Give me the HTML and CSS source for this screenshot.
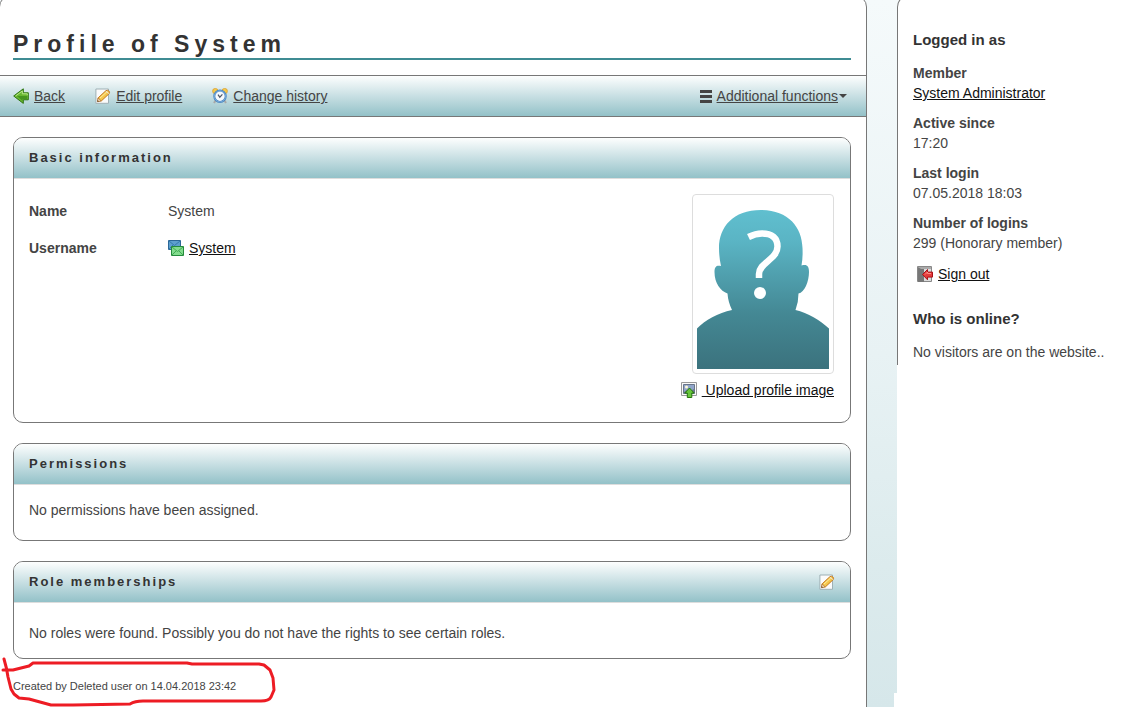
FILE: index.html
```html
<!DOCTYPE html>
<html lang="en">
<head>
  <meta charset="UTF-8">
  <meta name="viewport" content="width=device-width, initial-scale=1.0">
  <title>Profile of System</title>
  <link rel="stylesheet" href="styles.css">
</head>
<body>
  <div class="page">
    <main class="content">
      <h1 class="headline">Profile of System</h1>

      <nav class="toolbar">
        <a class="icon-link" href="#">
          <svg class="icon" viewBox="0 0 16 16">
            <path d="M.7 8 10.3.8v4h5v7h-5v3.6z" fill="#69b82f" stroke="#2f7513"/>
            <path d="M2.5 8 9.3 3v2.8h5v1.5" fill="none" stroke="#b9e58b"/>
            <path d="M4 8h10v3H9.6v2z" fill="#46951e"/>
          </svg>
          <span>Back</span>
        </a>
        <a class="icon-link" href="#">
          <svg class="icon" viewBox="0 0 16 16">
            <path d="M.9 1h12.6v14.3H.9z" fill="#fbfbfb" stroke="#9fb0b5"/>
            <path d="m3.2 9.8 7.7-7.1q1.6-1 3 .3 1.2 1.2.2 2.7l-7.5 7-3.9.8z" fill="#f4c64b" stroke="#c47a23"/>
            <path d="m5 10.1 7.2-6.6" stroke="#fff0a5"/>
            <path d="m3 9.9 3.2 3-3.6.9z" fill="#f7ddb8" stroke="#a06225" stroke-width=".6"/>
            <path d="m2.8 12 .9 1.4-1.2.4z" fill="#333"/>
            <path d="m10.9 2.9 2.9 2.8" stroke="#e9e2d7"/>
          </svg>
          <span>Edit profile</span>
        </a>
        <a class="icon-link" href="#">
          <svg class="icon" viewBox="0 0 16 16">
            <path d="M3.5 12.5 2 15m10.5-2.5L14 15" stroke="#a8a8a8" stroke-width="2"/>
            <circle cx="3.3" cy="3.1" r="2.7" fill="#f6c94a" stroke="#d79a24" stroke-width=".7"/>
            <circle cx="12.7" cy="3.1" r="2.7" fill="#f6c94a" stroke="#d79a24" stroke-width=".7"/>
            <circle cx="8" cy="8.3" r="5.7" fill="#f7fafd" stroke="#4583bf" stroke-width="2"/>
            <circle cx="8" cy="8.3" r="5.6" fill="none" stroke="#8db9e2" stroke-width=".7"/>
            <path d="m6 6.6 1.8 2.6 2.6-2.8" fill="none" stroke="#4b5668" stroke-width="1.2"/>
          </svg>
          <span>Change history</span>
        </a>
        <button class="icon-link menu-button" type="button">
          <svg class="icon-bars" viewBox="0 0 12 13">
            <path d="M0 1.5h12M0 6.5h12M0 11.5h12" stroke="#444" stroke-width="3"/>
          </svg>
          <span>Additional functions</span>
          <i class="caret"></i>
        </button>
      </nav>

      <section class="panel">
        <header class="panel-header">
          <h2 class="panel-title">Basic information</h2>
        </header>
        <div class="panel-body basic">
          <dl class="fields">
            <dt>Name</dt>
            <dd>System</dd>
            <dt>Username</dt>
            <dd>
              <a class="icon-link dark" href="#">
                <svg class="icon" viewBox="0 0 16 16">
                  <path d="M.5.5h12v9H.5z" fill="#5d9fce" stroke="#2c6798"/>
                  <path d="m1 1 5.5 4.5L12 1M1 9l4-4" fill="none" stroke="#347aad"/>
                  <path d="M3.5 6.5h12v9h-12z" fill="#82dc8d" stroke="#258b3c"/>
                  <path d="m4 7 5.5 4.5L15 7M4 15l4-4m7 4-4-4" fill="none" stroke="#42aa55"/>
                </svg>
                <span>System</span>
              </a>
            </dd>
          </dl>
          <div class="photo">
            <svg class="photo-image" viewBox="0 0 132 170">
              <defs>
                <linearGradient id="avatar" x1="0" y1="0" x2="0" y2="1">
                  <stop offset="0" stop-color="#60bfcf"/>
                  <stop offset=".2" stop-color="#5ab4c4"/>
                  <stop offset=".65" stop-color="#448894"/>
                  <stop offset="1" stop-color="#3b727d"/>
                </linearGradient>
              </defs>
              <path fill="url(#avatar)" d="M64 11C36 11 22 28 22 49q0 9 2 18c-4-1-6.500 0-6.500 6 0 11 6 19 13 21.500q.5 8 4.500 16.500C21 114 8 121 0 129.500V170h132v-40.500C123 121 111 114 98.500 111q3-8 3-16.500c6-1 10.500-12 10.500-21.500 0-6-2-8-7.500-6.500q1.500-8 1-17.500C105 28 91 11 64 11z"/>
              <path fill="none" stroke="#fff" stroke-width="6.500" d="M51.500 38q7-3.500 13.500-3.500c10 0 15.500 4.500 15.500 13 0 13-18.500 16-18.500 27.500V79"/>
              <circle cx="63" cy="94" r="6" fill="#fff"/>
            </svg>
            <a class="icon-link dark" href="#">
              <svg class="icon" viewBox="0 0 16 16">
                <path d="M.5.5h15v13H.5z" fill="#fafafa" stroke="#999"/>
                <path d="M2.500 2.500h11v9h-11z" fill="#91a6ca" stroke="#69758a"/>
                <circle cx="5.500" cy="5" r="1.500" fill="#fff8d8"/>
                <path d="m3 10 3-2 3 1 4-2v4H3z" fill="#6c7891"/>
                <path d="m8.500 6 4.700 5h-2.400v4.500H6.300V11H3.800z" fill="#67c63b" stroke="#26760d"/>
              </svg>
              <span>&nbsp;Upload profile image</span>
            </a>
          </div>
        </div>
      </section>

      <section class="panel">
        <header class="panel-header">
          <h2 class="panel-title">Permissions</h2>
        </header>
        <p class="panel-body permissions">No permissions have been assigned.</p>
      </section>

      <section class="panel">
        <header class="panel-header">
          <h2 class="panel-title">Role memberships</h2>
          <a class="icon-link" href="#" aria-label="Edit role memberships">
            <svg class="icon" viewBox="0 0 16 16">
              <path d="M.9 1h12.600v14.300H.9z" fill="#fbfbfb" stroke="#9fb0b5"/>
              <path d="m3.200 9.800 7.700-7.100q1.600-1 3 .3 1.200 1.200.2 2.700l-7.500 7-3.900.8z" fill="#f4c64b" stroke="#c47a23"/>
              <path d="m5 10.100 7.200-6.600" stroke="#fff0a5"/>
              <path d="m3 9.900 3.200 3-3.600.9z" fill="#f7ddb8" stroke="#a06225" stroke-width=".6"/>
              <path d="m2.800 12 .9 1.400-1.200.4z" fill="#333"/>
              <path d="m10.900 2.900 2.900 2.800" stroke="#e9e2d7"/>
            </svg>
          </a>
        </header>
        <p class="panel-body roles">No roles were found. Possibly you do not have the rights to see certain roles.</p>
      </section>

      <p class="created">
        Created by Deleted user on 14.04.2018 23:42
        <svg class="marker" viewBox="0 0 280 52">
          <path d="M4 3q3 10 4 18l3 12 3 5 5 4 10 1 22 6h22l57-1q5-3 13-3h118q8 0 10-4l3-7-1-12-3-8-6-5-5-1h-67l-5-1H33l-4 3-8 2-8 2H3"/>
        </svg>
      </p>
    </main>

    <aside class="side">
      <div class="side-panel">
        <h3 class="side-title">Logged in as</h3>
        <dl class="facts">
          <dt>Member</dt>
          <dd><a class="dark" href="#">System Administrator</a></dd>
          <dt>Active since</dt>
          <dd>17:20</dd>
          <dt>Last login</dt>
          <dd>07.05.2018 18:03</dd>
          <dt>Number of logins</dt>
          <dd>299 (Honorary member)</dd>
        </dl>
        <a class="icon-link dark sign-out" href="#">
          <svg class="icon" viewBox="0 0 16 16">
            <path d="M.5.500h14v15H.5z" fill="#ddd" stroke="#888"/>
            <path d="M1 1 7 3v13H1z" fill="#777"/>
            <path d="M1 1h13v2H4z" fill="#aaa"/>
            <path d="m5.500 8.500 5-5v2.600h5v5h-5v2.700z" fill="#e43b3b" stroke="#a91118"/>
            <path d="m8 8.500 2.500-2.500v1.500H14" fill="none" stroke="#ff8d85"/>
          </svg>
          <span>Sign out</span>
        </a>
        <h3 class="side-title">Who is online?</h3>
        <p class="online">No visitors are on the website..</p>
      </div>
      <div class="side-foot"></div>
    </aside>
  </div>
</body>
</html>
```
FILE: styles.css
```css
* {
  box-sizing: border-box;
}

body {
  margin: 0;
  overflow: hidden;
  font-family: "Liberation Sans", Arial, sans-serif;
  font-size: 14px;
  line-height: 20px;
  color: #444;
  background: linear-gradient(#f5fafb, #e8f2f4 50%, #dcebed 80%, #d6e7ea);
}

h1, h2, h3, p, dl, dd {
  margin: 0;
}

.page {
  display: flex;
  gap: 30px;
  height: 100vh;
}

/* Main column */
.content {
  flex: 1;
  margin: -5px 0 -20px -1px;
  padding-top: 34px;
  background: #fff;
  border: 1px solid #777;
  border-radius: 12px;
}

.headline {
  margin: 0 15px 15px 13px;
  border-bottom: 2px solid #3f8c93;
  font-size: 23px;
  line-height: 28px;
  letter-spacing: 5px;
  color: #333;
}

.toolbar {
  display: flex;
  align-items: center;
  gap: 30px;
  height: 42px;
  padding: 0 19px 0 13px;
  border-top: 1px solid #777;
  border-bottom: 1px solid #777;
  background: linear-gradient(#fdfefe, #93c1c8);
}

.icon-link {
  display: inline-flex;
  align-items: center;
  gap: 5px;
  color: #444;
  text-decoration: none;
}

.icon-link span {
  text-decoration: underline;
}

.dark {
  color: #111;
}

.icon {
  width: 16px;
  height: 16px;
}

.menu-button {
  margin-left: auto;
  padding: 0;
  border: 0;
  background: none;
  font: inherit;
  cursor: pointer;
}

.icon-bars {
  width: 12px;
  height: 13px;
}

.caret {
  margin-left: -4px;
  border: 4px solid transparent;
  border-top-color: #444;
  border-bottom: 0;
}

/* Panels */
.panel {
  margin: 20px 15px 0 13px;
  border: 1px solid #777;
  border-radius: 10px;
  overflow: hidden;
}

.panel-header {
  display: flex;
  align-items: center;
  justify-content: space-between;
  height: 41px;
  padding: 0 15px;
  border-bottom: 1px solid #ddd;
  background: linear-gradient(#fdfefe, #93c1c8);
}

.panel-title {
  font-size: 13px;
  line-height: 20px;
  letter-spacing: 2px;
  color: #333;
}

.panel-body {
  padding: 15px;
}

.basic {
  display: flex;
  justify-content: space-between;
  padding: 15px 16px 22px 15px;
}

.fields {
  display: grid;
  grid-template-columns: 139px auto;
  align-content: start;
  row-gap: 17px;
  padding-top: 7px;
}

.fields dt, .facts dt {
  font-weight: bold;
}

.photo {
  display: flex;
  flex-direction: column;
  align-items: flex-end;
  gap: 6px;
}

.photo-image {
  width: 142px;
  height: 180px;
  padding: 4px;
  border: 1px solid #ddd;
  border-radius: 4px;
}

.permissions {
  padding-bottom: 20px;
}

.roles {
  padding-top: 20px;
}

.created {
  position: relative;
  margin: 17px 15px 0 13px;
  font-size: 11px;
}

/* Hand-drawn red circle over the created line */
.marker {
  position: absolute;
  left: -13px;
  top: -20px;
  width: 280px;
  height: 52px;
  fill: none;
  stroke: #ed1c24;
  stroke-width: 3;
  stroke-linecap: round;
  stroke-linejoin: round;
}

/* Sidebar */
.side {
  display: flex;
  flex-direction: column;
  justify-content: space-between;
  width: 247px;
  background: linear-gradient(#fff, #fff) 0 20px no-repeat;
}

.side-panel {
  margin-top: -5px;
  padding: 34px 15px 3px;
  background: #fff;
  border-left: 1px solid #777;
  border-top: 1px solid #777;
  border-top-left-radius: 12px;
}

.side-title {
  font-size: 15px;
  line-height: 20px;
  color: #333;
}

.facts {
  margin-top: 13px;
}

.facts dd {
  margin-bottom: 10px;
}

.sign-out {
  margin: 1px 0 25px 4px;
}

.online {
  margin-top: 13px;
}

.side-foot {
  height: 14px;
  margin-left: -3px;
  background: #fff;
}
```
